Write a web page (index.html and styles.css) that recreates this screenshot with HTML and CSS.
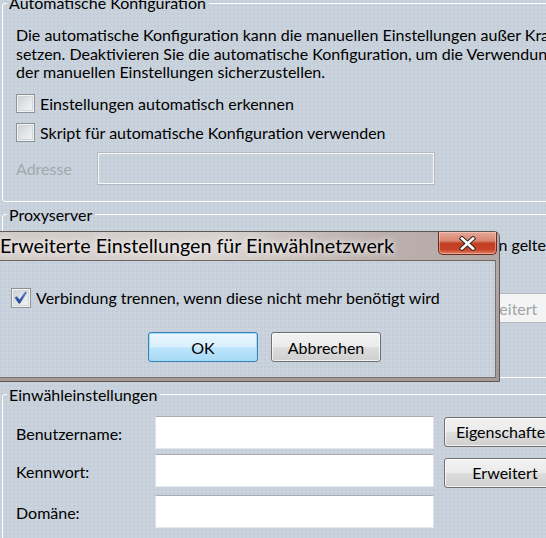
FILE: index.html
```html
<!DOCTYPE html>
<html lang="de">
<head>
<meta charset="utf-8">
<title>Einstellungen</title>
<link rel="stylesheet" href="styles.css">
</head>
<body>
<div class="window">
  <fieldset class="group group-auto">
    <legend>Automatische Konfiguration</legend>
    <div class="group-body">
      <p class="desc">Die automatische Konfiguration kann die manuellen Einstellungen außer Kraft<br>setzen. Deaktivieren Sie die automatische Konfiguration, um die Verwendung<br>der manuellen Einstellungen sicherzustellen.</p>
      <label class="check check-first"><span class="box"></span>Einstellungen automatisch erkennen</label>
      <label class="check check-next"><span class="box"></span>Skript für automatische Konfiguration verwenden</label>
      <div class="addr-row">
        <span class="addr-label">Adresse</span>
        <span class="input input-disabled addr-input"></span>
      </div>
    </div>
  </fieldset>

  <fieldset class="group group-proxy">
    <legend>Proxyserver</legend>
    <div class="group-body">
      <label class="check proxy-check"><span class="box"></span>Proxyserver für diese Verbindung verwenden (Diese Einstellungen gelten nicht für<br>andere Verbindungen).</label>
      <div class="proxy-row">
        <span class="addr-label">Adresse:</span>
        <span class="input input-disabled proxy-addr"></span>
        <span class="addr-label">Port:</span>
        <span class="input input-disabled proxy-port"></span>
        <span class="btn btn-disabled proxy-adv">Erweitert</span>
      </div>
      <label class="check proxy-local"><span class="box"></span>Proxyserver für lokale Adressen umgehen</label>
    </div>
  </fieldset>

  <fieldset class="group group-dial">
    <legend>Einwähleinstellungen</legend>
    <div class="group-body dial-grid">
      <span class="dial-label row-1">Benutzername:</span>
      <span class="input dial-input row-1"></span>
      <span class="btn dial-btn btn-props">Eigenschaften</span>
      <span class="dial-label row-2">Kennwort:</span>
      <span class="input dial-input row-2"></span>
      <span class="btn dial-btn btn-adv">Erweitert</span>
      <span class="dial-label row-3">Domäne:</span>
      <span class="input dial-input row-3"></span>
    </div>
  </fieldset>
</div>

<div class="dialog">
  <div class="titlebar">
    <span class="title">Erweiterte Einstellungen für Einwählnetzwerk</span>
    <span class="close">
      <svg width="17" height="15" viewBox="0 0 17 15">
        <path d="M3 2.5 L14 12.5 M14 2.5 L3 12.5" stroke="#3b2a27" stroke-width="4.6" stroke-linecap="square" fill="none"/>
        <path d="M3 2.5 L14 12.5 M14 2.5 L3 12.5" stroke="#ffffff" stroke-width="2.6" stroke-linecap="square" fill="none"/>
      </svg>
    </span>
  </div>
  <div class="client">
    <label class="check dlg-check">
      <span class="box">
        <svg width="17" height="17" viewBox="0 0 17 17">
          <defs>
            <linearGradient id="tick" x1="0" y1="0" x2="0" y2="1">
              <stop offset="0" stop-color="#5a86d6"/>
              <stop offset="1" stop-color="#1f3f86"/>
            </linearGradient>
          </defs>
          <path d="M2.5 8.6 L5 7.2 L7.6 10.6 L13.2 2.4 L15 3.4 L8 14.4 L6.6 14.4 Z" fill="url(#tick)"/>
        </svg>
      </span>Verbindung trennen, wenn diese nicht mehr benötigt wird</label>
    <div class="dlg-buttons">
      <span class="btn btn-default">OK</span>
      <span class="btn">Abbrechen</span>
    </div>
  </div>
</div>
</body>
</html>
```
FILE: styles.css
```css
html, body {
  margin: 0;
  padding: 0;
}

body {
  position: relative;
  width: 546px;
  height: 538px;
  overflow: hidden;
  font-family: Lato, "Noto Sans", sans-serif;
  font-size: 16px;
  color: #000;
  background-color: #cad2db;
  background-image: radial-gradient(circle, rgba(176, 194, 216, 0.55) 0.6px, transparent 0.9px);
  background-size: 4px 4px;
}

.window {
  width: 680px;
  margin-top: -7px;
}

/* group boxes */
.group {
  margin: 0 0 0 2px;
  padding: 0;
  border: 1px solid #ffffff;
  border-radius: 3px;
  min-width: 0;
}

.group legend {
  margin-left: 4px;
  padding: 0 3px 0 2px;
  line-height: 20px;
  white-space: nowrap;
}

.group-body {
  padding-left: 13px;
}

.group-auto {
  padding: 13px 0 16px 0;
}

.group-proxy {
  margin-top: 3px;
  height: 173px;
  box-sizing: border-box;
  padding: 10px 0 0 0;
}

.group-proxy .group-body {
  padding-left: 14px;
}

.group-dial {
  margin-top: 7px;
  padding: 11px 0 40px 0;
}

.desc {
  margin: 0;
  line-height: 18.5px;
  white-space: nowrap;
}

/* check boxes */
.check {
  display: flex;
  align-items: center;
  height: 19px;
  line-height: 19px;
  white-space: nowrap;
}

.box {
  flex: none;
  position: relative;
  width: 17px;
  height: 17px;
  margin-right: 5px;
  border: 1px solid #8f9295;
  background: linear-gradient(135deg, #c9ced3 0%, #e4e6e8 55%, #f6f6f6 100%);
  box-shadow: inset 0 0 0 1px #f2f3f4, inset 0 0 0 2px #d3d6d9;
}

.box svg {
  position: absolute;
  left: 0;
  top: 0;
}

.check-first {
  margin-top: 12px;
}

.check-next {
  margin-top: 10px;
}

.addr-row {
  display: flex;
  align-items: center;
  margin-top: 10px;
}

.addr-label {
  color: #a2a8ae;
  white-space: nowrap;
}

.input {
  display: block;
  box-sizing: border-box;
  height: 33px;
  background: #ffffff;
  border: 1px solid #e2e3ea;
  border-top-color: #abadb3;
  border-bottom-color: #e3e9ef;
}

.input-disabled {
  background: transparent;
  border: 1px solid #b4b8bc;
  box-shadow: inset 0 0 0 1px #f7f8f9;
}

.addr-input {
  width: 338px;
  height: 33px;
  margin-left: 25px;
}

/* proxy section, mostly under the dialog */
.proxy-check {
  margin-left: 6px;
  align-items: flex-start;
  height: auto;
}

.proxy-check .box {
  margin-top: 1px;
}

.proxy-row {
  display: flex;
  align-items: center;
  gap: 8px;
  margin: 19px 0 0 24px;
}

.proxy-addr {
  width: 210px;
}

.proxy-port {
  width: 64px;
}

.proxy-adv {
  margin-left: 3px;
}

.proxy-local {
  margin: 14px 0 0 1px;
}

/* buttons */
.btn {
  display: inline-flex;
  align-items: center;
  justify-content: center;
  box-sizing: border-box;
  width: 110px;
  height: 30px;
  border: 1px solid #707070;
  border-radius: 3px;
  background: linear-gradient(#f2f2f2 0%, #ebebeb 48%, #dddddd 52%, #cfcfcf 100%);
  box-shadow: inset 0 0 0 1px rgba(255, 255, 255, 0.7);
  white-space: nowrap;
  flex: none;
}

.btn-disabled {
  width: 122px;
  color: #a0a4a8;
  border-color: #b5b8bc;
  background: #f4f4f4;
  box-shadow: none;
}

.btn-default {
  border-color: #3c7fb1;
  background: linear-gradient(#eaf6fd 0%, #d9f0fc 48%, #bee6fd 52%, #a7d9f5 100%);
  box-shadow: inset 0 0 0 1px #9fdcf9;
}

/* dial-up settings */
.dial-grid {
  display: grid;
  grid-template-columns: 129px 279px 122px;
  column-gap: 10px;
  align-items: center;
}

.dial-label {
  grid-column: 1;
  padding-top: 2px;
}

.dial-input {
  grid-column: 2;
}

.row-1 { grid-row: 1; }
.row-2 { grid-row: 2; margin-top: 5px; }
.row-3 { grid-row: 3; margin-top: 7px; }

.dial-btn {
  grid-column: 3;
  width: 122px;
  align-self: start;
}

.btn-props {
  grid-row: 1;
  margin-top: 1px;
}

.btn-adv {
  grid-row: 2;
  margin-top: 9px;
}

/* dialog window */
.dialog {
  position: absolute;
  left: -10px;
  top: 231px;
  width: 510px;
  box-sizing: border-box;
  padding: 0 3px 3px 3px;
  border: 1px solid #5f5754;
  border-radius: 6px 6px 0 0;
  background: linear-gradient(#b9aeab, #a39996);
}

.titlebar {
  position: relative;
  height: 28px;
  display: flex;
  align-items: center;
  background: linear-gradient(90deg, #d2cac7 0%, #d9d2cf 45%, #bcb1ae 75%, #b3a8a5 100%);
  margin: 0 -3px;
  padding-left: 9px;
  border-radius: 5px 5px 0 0;
}

.title {
  font-size: 19.7px;
  line-height: 24px;
  white-space: nowrap;
  text-shadow: 0 0 6px rgba(255, 255, 255, 0.9), 0 0 10px rgba(255, 255, 255, 0.6);
}

.close {
  position: absolute;
  top: 0;
  right: 2px;
  width: 59px;
  height: 23px;
  box-sizing: border-box;
  display: flex;
  align-items: center;
  justify-content: center;
  border: 1px solid #6a2a1e;
  border-top: none;
  border-radius: 0 0 5px 5px;
  background: linear-gradient(#e6a898 0%, #d88670 40%, #c33d22 52%, #c94329 80%, #de8467 100%);
  box-shadow: inset 0 0 0 1px rgba(255, 220, 210, 0.45);
}

.client {
  border: 1px solid #7a716e;
  border-top-color: #6d6562;
  background-color: #cad2db;
  background-image: radial-gradient(circle, rgba(176, 194, 216, 0.55) 0.6px, transparent 0.9px);
  background-size: 4px 4px;
  padding: 27px 0 15px 16px;
}

.dlg-check {
  height: 19px;
}

.dlg-check .box {
  width: 18px;
  height: 18px;
  margin-right: 5px;
}

.dlg-buttons {
  display: flex;
  gap: 13px;
  margin: 25px 0 0 137px;
}
```
